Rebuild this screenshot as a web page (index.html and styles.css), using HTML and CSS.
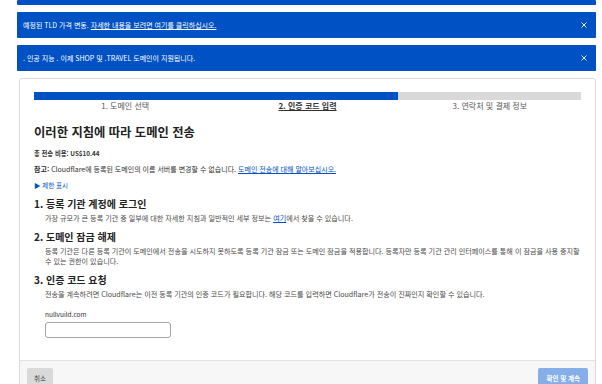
FILE: index.html
```html
<!DOCTYPE html>
<html lang="ko">
<head>
    <meta charset="UTF-8">
    <meta name="viewport" content="width=device-width, initial-scale=1.0">
    <title>도메인 전송</title>
    <link rel="stylesheet" href="styles.css">
</head>
<body>
    <div class="page">
        <div class="banner banner-cut"></div>
        <div class="banner">
            <span>예정된 TLD 가격 변동. <a href="#">자세한 내용을 보려면 여기를 클릭하십시오.</a></span>
            <button class="close">
                <svg width="6" height="6" viewBox="0 0 6 6"><path d="M0.5 0.5L5.5 5.5M5.5 0.5L0.5 5.5" stroke="#fff" stroke-width="0.9"/></svg>
            </button>
        </div>
        <div class="banner">
            <span>. 인공 지능 . 이제 SHOP 및 .TRAVEL 도메인이 지원됩니다.</span>
            <button class="close">
                <svg width="6" height="6" viewBox="0 0 6 6"><path d="M0.5 0.5L5.5 5.5M5.5 0.5L0.5 5.5" stroke="#fff" stroke-width="0.9"/></svg>
            </button>
        </div>

        <div class="card">
            <div class="card-body">
                <div class="progress">
                    <div class="progress-fill"></div>
                </div>
                <div class="steps">
                    <div class="step">1. 도메인 선택</div>
                    <div class="step current">2. 인증 코드 입력</div>
                    <div class="step">3. 연락처 및 결제 정보</div>
                </div>

                <h1>이러한 지침에 따라 도메인 전송</h1>
                <p class="cost">총 전송 비용: US$10.44</p>
                <p class="note"><b>참고:</b> Cloudflare에 등록된 도메인의 이름 서버를 변경할 수 없습니다. <a href="#">도메인 전송에 대해 알아보십시오.</a></p>
                <p class="toggle">&#9654; 제한 표시</p>

                <h2>1. 등록 기관 계정에 로그인</h2>
                <p class="text">가장 규모가 큰 등록 기관 중 일부에 대한 자세한 지침과 일반적인 세부 정보는 <a href="#">여기</a>에서 찾을 수 있습니다.</p>

                <h2>2. 도메인 잠금 해제</h2>
                <p class="text">등록 기관은 다른 등록 기관이 도메인에서 전송을 시도하지 못하도록 등록 기관 잠금 또는 도메인 잠금을 적용합니다. 등록자만 등록 기관 관리 인터페이스를 통해 이 잠금을 사용 중지할 수 있는 권한이 있습니다.</p>

                <h2>3. 인증 코드 요청</h2>
                <p class="text">전송을 계속하려면 Cloudflare는 이전 등록 기관의 인증 코드가 필요합니다. 해당 코드를 입력하면 Cloudflare가 전송이 진짜인지 확인할 수 있습니다.</p>

                <div class="field">
                    <label for="code">nullvuild.com</label>
                    <input type="text" id="code">
                </div>
            </div>
            <div class="card-footer">
                <button class="btn">취소</button>
                <button class="btn btn-primary" disabled>확인 및 계속</button>
            </div>
        </div>
    </div>
</body>
</html>
```

FILE: styles.css
```css
body {
    margin: 0;
    font-family: "Noto Sans CJK KR", "Noto Sans", sans-serif;
    color: #313131;
    background: #fff;
}

.page {
    width: 579px;
    margin-left: 17px;
    display: flex;
    flex-direction: column;
    gap: 7px;
}

.banner {
    background: #0051c3;
    color: #fff;
    height: 26px;
    padding: 0 9px 0 6px;
    display: flex;
    align-items: center;
    justify-content: space-between;
    font-size: 7px;
    border-radius: 1px;
}

.banner-cut {
    height: 5px;
}

.banner a {
    color: #fff;
}

.close {
    background: none;
    border: none;
    padding: 0;
    display: flex;
    cursor: pointer;
}

.card {
    margin-left: 2px;
    border: 1px solid #d9d9d9;
    border-radius: 3px;
}

.card-body {
    padding: 13px 14px 22px 14px;
}

.progress {
    height: 8px;
    background: #d9d9d9;
}

.progress-fill {
    width: 66.6%;
    height: 100%;
    background: #0051c3;
}

.steps {
    display: grid;
    grid-template-columns: 1fr 1fr 1fr;
    font-size: 8px;
    line-height: 10px;
    color: #595959;
    text-align: center;
    margin-top: 1px;
}

.step.current {
    color: #313131;
    font-weight: bold;
    text-decoration: underline;
}

h1 {
    font-size: 12.3px;
    line-height: 16px;
    font-weight: bold;
    margin: 13px 0 9px;
    color: #222;
}

h2 {
    font-size: 10px;
    line-height: 12px;
    font-weight: bold;
    margin: 8px 0 3px;
    color: #222;
}

p {
    margin: 0;
    font-size: 7.1px;
    line-height: 10px;
}

.cost {
    font-size: 6.3px;
    font-weight: bold;
    margin-bottom: 5px;
}

.note {
    font-size: 7px;
    margin-bottom: 6px;
}

a {
    color: #0051c3;
}

.toggle {
    color: #0051c3;
    font-size: 6.5px;
}

.text {
    margin-left: 11px;
    color: #4a4a4a;
}

.field {
    margin: 10px 0 0 11px;
    display: flex;
    flex-direction: column;
    gap: 3px;
    font-size: 6.5px;
    line-height: 10px;
}

.field input {
    box-sizing: border-box;
    width: 126px;
    height: 16px;
    border: 1px solid #a6a6a6;
    border-radius: 3px;
}

.card-footer {
    background: #f7f7f7;
    border-top: 1px solid #e3e3e3;
    padding: 7px 7px;
    display: flex;
    justify-content: space-between;
}

.btn {
    font-family: inherit;
    font-size: 6.5px;
    line-height: 10px;
    border: none;
    border-radius: 2px;
    background: #d9d9d9;
    color: #444;
    padding: 5px 7px;
}

.btn-primary {
    background: #86aee8;
    color: #fff;
    font-weight: bold;
    padding: 5px 8px;
}
```
